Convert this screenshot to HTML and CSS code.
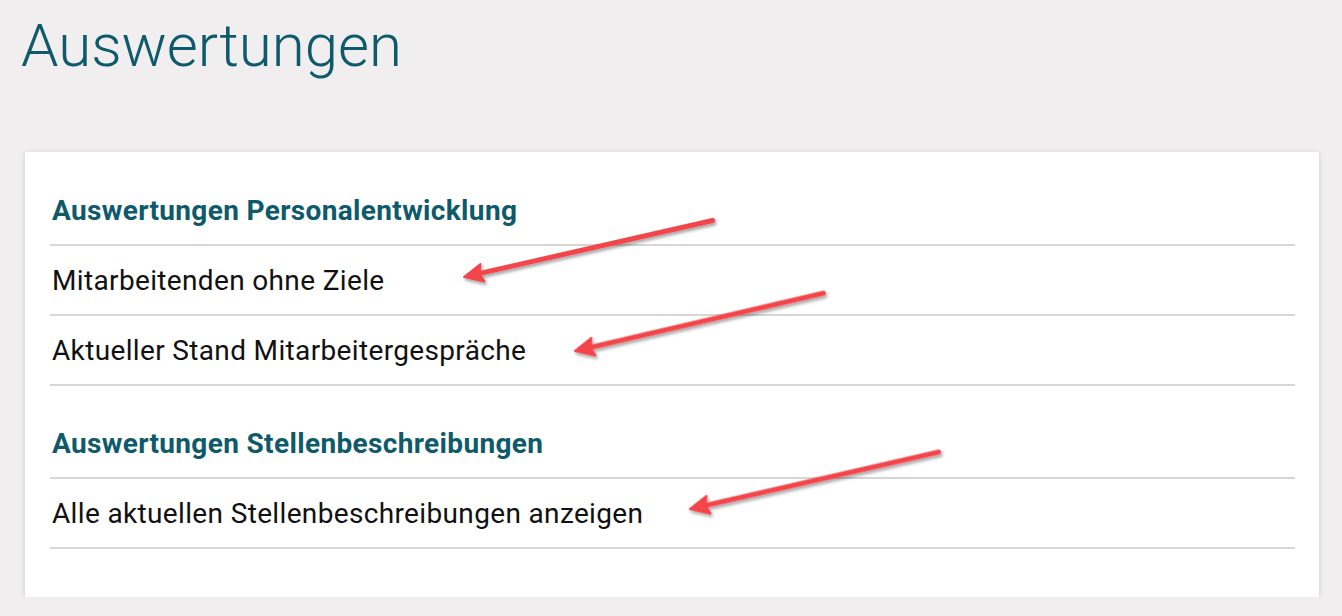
FILE: index.html
```html
<!DOCTYPE html>
<html lang="de">
<head>
    <meta charset="UTF-8">
    <meta name="viewport" content="width=device-width, initial-scale=1.0">
    <title>Auswertungen</title>
    <link rel="stylesheet" href="styles.css">
</head>
<body>
    <div class="page">
        <h1>Auswertungen</h1>

        <div class="card">
            <div class="section">
                <h2>Auswertungen Personalentwicklung</h2>
                <a class="report-link" href="#">Mitarbeitenden ohne Ziele</a>
                <a class="report-link" href="#">Aktueller Stand Mitarbeitergespräche</a>
            </div>
            <div class="section">
                <h2>Auswertungen Stellenbeschreibungen</h2>
                <a class="report-link" href="#">Alle aktuellen Stellenbeschreibungen anzeigen</a>
            </div>
        </div>
    </div>

    <!-- Markierungspfeile (Annotation über dem Inhalt) -->
    <svg class="annotations" width="1342" height="616" viewBox="0 0 1342 616">
        <defs>
            <filter id="arrowShadow" x="-10%" y="-50%" width="120%" height="200%">
                <feDropShadow dx="1.5" dy="2.5" stdDeviation="1.6" flood-color="#000" flood-opacity="0.35"/>
            </filter>
            <g id="arrow">
                <line x1="14" y1="0" x2="255" y2="0" stroke-width="5" stroke-linecap="round"/>
                <polygon points="0,0 19,-9 16,0 19,9" stroke-width="2" stroke-linejoin="round"/>
            </g>
        </defs>
        <g class="arrow" filter="url(#arrowShadow)">
            <use href="#arrow" transform="translate(464 277) rotate(-12.8)"/>
            <use href="#arrow" transform="translate(575 351) rotate(-13.1)"/>
            <use href="#arrow" transform="translate(690 509) rotate(-12.9)"/>
        </g>
    </svg>
</body>
</html>
```

FILE: styles.css
```css
body {
    margin: 0;
    font-family: Roboto, "Liberation Sans", sans-serif;
    background-color: #f0eeef;
    color: #111;
}
.page {
    padding: 0 23px 0 25px;
}
h1 {
    font-size: 60px;
    font-weight: 300;
    line-height: 72px;
    color: #0e5a6b;
    margin: 10px 0 70px -4px;
}
.card {
    background-color: #fff;
    padding: 26px 24px 48px 25px;
    box-shadow: 0 1px 6px rgba(0, 0, 0, 0.14);
}
.section + .section {
    margin-top: 25px;
}
h2 {
    font-size: 28px;
    font-weight: 700;
    line-height: 32px;
    letter-spacing: 0.35px;
    color: #0e5a6b;
    margin: 0;
    padding: 17px 0 17px 2px;
    border-bottom: 2px solid #d6d6d6;
}
.report-link {
    display: block;
    font-size: 28px;
    line-height: 32px;
    letter-spacing: 0.35px;
    color: #111;
    text-decoration: none;
    padding: 19px 0 17px 2px;
    border-bottom: 2px solid #d6d6d6;
}
.report-link:hover {
    color: #0e5a6b;
}

/* Pfeile liegen über dem Inhalt */
.annotations {
    position: absolute;
    top: 0;
    left: 0;
    pointer-events: none;
}
.arrow {
    fill: #f4444b;
    stroke: #f4444b;
}
```
